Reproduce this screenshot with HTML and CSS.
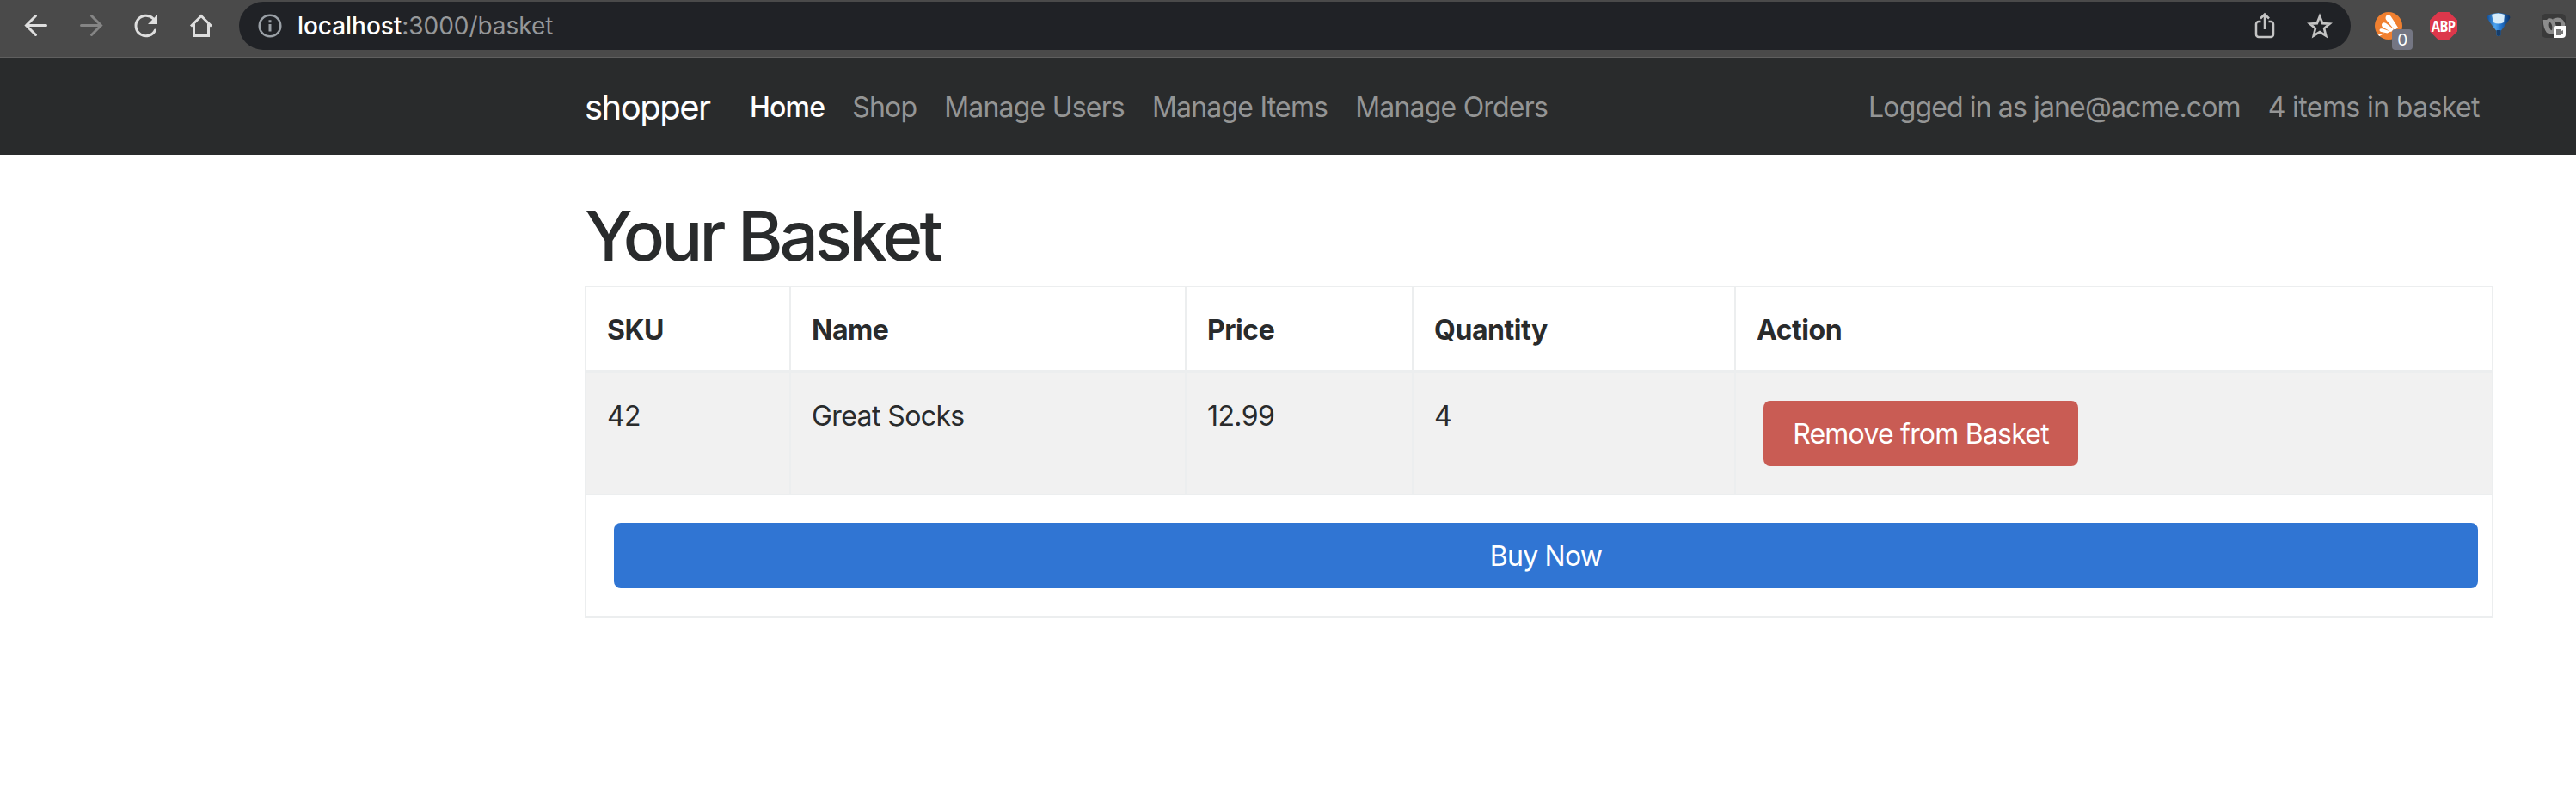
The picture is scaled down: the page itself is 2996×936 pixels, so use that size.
FILE: index.html
```html
<!DOCTYPE html>
<html lang="en">
<head>
<meta charset="utf-8">
<title>shopper</title>
<link rel="stylesheet" href="styles.css">
</head>
<body>
<header class="toolbar">
  <div class="nav-icons">
    <svg class="ic" viewBox="0 0 32 40" fill="none" stroke="#dedede" stroke-width="3" stroke-linecap="round"><path d="M27.500 19.500H4.500M15.500 8.500L4.500 19.500l11 11"/></svg>
    <svg class="ic" viewBox="0 0 32 40" fill="none" stroke="#858585" stroke-width="3" stroke-linecap="round"><path d="M4.500 19.500h23M16.500 8.500l11 11-11 11"/></svg>
    <svg class="ic" viewBox="0 0 32 40" fill="none" stroke="#dedede" stroke-width="3" stroke-linecap="round"><path d="M26.500 25A11.800 11.800 0 1 1 24 11.500"/><path d="M29 7v11H18z" fill="#dedede" stroke="none"/></svg>
    <svg class="ic" viewBox="0 0 32 40" fill="none" stroke="#dedede" stroke-width="3"><path d="M4 20.500L16 8.500l12 12M7.500 18v13.500h17V18"/></svg>
  </div>
  <div class="address">
    <svg class="info" viewBox="0 0 28 28" fill="none" stroke="#9aa0a6" stroke-width="2.500"><circle cx="14" cy="14" r="12.300"/><path d="M14 12v8.500M14 7.300v3" stroke-width="3"/></svg>
    <span class="url"><b>localhost</b>:3000/basket</span>
    <svg class="share" viewBox="0 0 24 32" fill="none" stroke="#c4c4c4" stroke-width="2.500"><path d="M7.500 11H5a3 3 0 0 0-3 3v12a3 3 0 0 0 3 3h14a3 3 0 0 0 3-3V14a3 3 0 0 0-3-3h-2.500M12 20V3M7 7.500l5-5 5 5"/></svg>
    <svg class="star" viewBox="0 0 30 30" fill="none" stroke="#c4c4c4" stroke-width="2.700"><path d="M15 4l3.200 8.100 8.300.5-6.400 5.400 2.100 8.500L15 22l-7.200 4.500L9.900 18 3.500 12.600l8.300-.5z"/></svg>
  </div>
  <div class="extensions">
    <div class="avast">
      <svg viewBox="0 0 32 32"><circle cx="16" cy="16" r="16" fill="#f08030"/><path d="M12.500 7c0-4 4.500-4.500 6.500-1.500L27 18l-4 3-9-11c-1-1-1.500-2-1.500-3zM8 15c0-3 3-3.500 5-2l9 7-3 3-9-5c-1-.5-2-1.500-2-3zM5.500 21c0-2 2-2.200 4-1.500l9 3-4 2-7-1.500c-1-.3-2-1-2-2zM3.500 26.500l8-2-6 3.500z" fill="#fff"/></svg>
      <span class="count">0</span>
    </div>
    <div class="abp"><span>ABP</span></div>
    <svg class="funnel" viewBox="0 0 28 30"><defs><linearGradient id="g"><stop offset="0" stop-color="#0d4a94"/><stop offset=".35" stop-color="#4fa5f0"/><stop offset=".6" stop-color="#2476cf"/><stop offset="1" stop-color="#0a2f63"/></linearGradient></defs><path d="M.5 6Q1 2 14 1q13 1 13.500 5-.5 3-11 16v5q-2.500 2-5 0v-5Q1 9 .5 6z" fill="url(#g)"/><path d="M6 3q8-3 15 0l-1 9q-6 3-12 0z" fill="#d7ecfa"/><path d="M11.500 21h5v6q-2.500 2-5 0z" fill="#153d6b"/></svg>
    <svg class="recorder" viewBox="0 0 28 28"><rect width="28" height="28" rx="5" fill="#3a3a3a"/><g fill="none" stroke="#8c8c8c" stroke-width="4.500"><ellipse cx="10.500" cy="14.500" rx="4" ry="7" transform="rotate(-12 10.500 14.500)"/><path d="M4 7q0 9 4 14M14 8q8-4 11 4v3"/></g><path d="M14 16q0-2 2-2h12v10q0 4-4 4H14z" fill="#fff"/><path d="M17 18h6v2l2-1v5l-2-1v2h-6z" fill="#777"/></svg>
  </div>
</header>
<nav class="navbar">
  <a class="brand">shopper</a>
  <div class="links">
    <a class="active">Home</a><a>Shop</a><a>Manage Users</a><a>Manage Items</a><a>Manage Orders</a>
  </div>
  <div class="account"><span class="user">Logged in as jane@acme.com</span><span>4 items in basket</span></div>
</nav>
<main class="container">
  <h1>Your Basket</h1>
  <table class="basket">
    <colgroup><col class="c1"><col class="c2"><col class="c3"><col class="c4"><col></colgroup>
    <thead><tr><th>SKU</th><th>Name</th><th>Price</th><th>Quantity</th><th>Action</th></tr></thead>
    <tbody>
      <tr class="item"><td>42</td><td>Great Socks</td><td>12.99</td><td>4</td><td><button class="btn danger">Remove from Basket</button></td></tr>
      <tr class="checkout"><td colspan="5"><button class="btn primary">Buy Now</button></td></tr>
    </tbody>
  </table>
</main>
</body>
</html>
```
FILE: styles.css
```css
* { box-sizing: border-box; }
body { margin: 0; height: 936px; overflow: hidden; background: #fff; color: #292b2c; font: 32px/48px Inter, "Liberation Sans", sans-serif; letter-spacing: -.6px; }
svg { display: block; }
.toolbar { height: 68px; display: flex; align-items: flex-start; background: #4a4a4a; border-bottom: 2px solid #5f5f5f; overflow: hidden; }
.nav-icons { display: flex; gap: 32px; padding: 10px 0 0 26px; width: 278px; flex: none; }
.ic { width: 32px; height: 40px; flex: none; }
.address { margin-top: 2px; width: 2456px; height: 56px; flex: none; border-radius: 28px; background: #202226; display: flex; align-items: center; padding: 0 21px 0 22px; }
.info { width: 28px; height: 28px; }
.url { margin-left: 18px; flex: 1; font-size: 28px; letter-spacing: -.05px; color: #96989a; }
.url b { font-weight: 450; color: #fff; }
.share { width: 24px; height: 32px; margin-right: 37px; }
.star { width: 30px; height: 30px; }
.extensions { display: flex; align-items: flex-start; padding: 14px 0 0 28px; }
.avast { position: relative; width: 32px; height: 32px; margin-right: 32px; }
.count { position: absolute; left: 20px; top: 20px; width: 24px; height: 24px; border-radius: 4px; background: #747683; color: #fff; font-size: 19px; line-height: 26px; text-align: center; }
.abp { width: 32px; height: 32px; background: #dd374b; clip-path: polygon(30% 0, 70% 0, 100% 30%, 100% 70%, 70% 100%, 30% 100%, 0 70%, 0 30%); color: #fff; font: 700 17px/33px "Noto Sans", sans-serif; letter-spacing: -.8px; display: flex; justify-content: center; }
.abp span { transform: scaleX(.88); }
.funnel { width: 28px; height: 30px; margin: 0 36px 0 34px; }
.recorder { width: 28px; height: 28px; margin-top: 2px; }
.navbar { height: 112px; background: #292b2c; display: flex; align-items: center; padding: 2px 112px 0 680px; color: #949595; }
.brand { font-size: 40px; color: #fff; letter-spacing: -1.5px; width: 192px; }
.links, .account { display: flex; gap: 32px; }
.links { letter-spacing: -.8px; }
.links .active { color: #fff; font-weight: 500; }
.account { margin-left: auto; }
.user { letter-spacing: -.87px; }
.container { width: 2220px; margin-left: 680px; padding-top: 50px; }
h1 { margin: 0 0 14px; font-size: 80px; line-height: 88px; font-weight: 540; letter-spacing: -3.9px; }
.basket { width: 2220px; border-collapse: collapse; table-layout: fixed; }
.c1 { width: 238px; } .c2 { width: 460px; } .c3 { width: 264px; } .c4 { width: 375px; }
th, td { border: 2px solid #eceeef; padding: 26px 24px 22px; text-align: left; vertical-align: top; }
th { height: 98px; font-weight: 700; letter-spacing: -.45px; border-bottom-width: 4px; }
.item { background: #f1f1f1; height: 143px; }
.checkout { height: 142px; }
.item td:last-child, .checkout td { padding: 32px; }
.btn { display: block; height: 76px; border: 0; border-radius: 8px; color: #fff; font: inherit; letter-spacing: -.78px; padding: 2px 0 0; }
.danger { width: 366px; background: #c95c54; }
.primary { width: 2168px; background: #3075d3; }
```
